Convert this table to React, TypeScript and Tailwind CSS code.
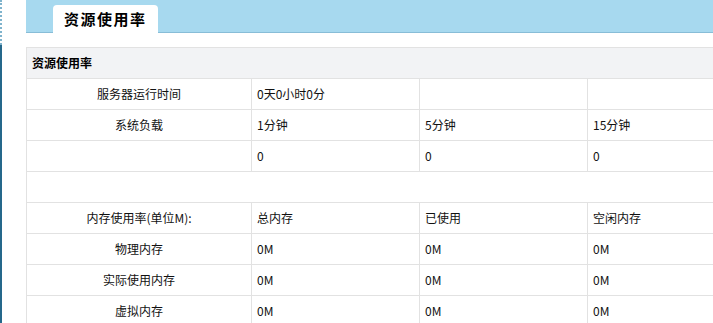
import React from "react";

const font = { fontFamily: '"Noto Sans CJK SC", "Liberation Sans", sans-serif' };

type Cell = { text?: string; center?: boolean };

const rows: Cell[][] = [
  [{ text: "服务器运行时间", center: true }, { text: "0天0小时0分" }, {}, {}],
  [{ text: "系统负载", center: true }, { text: "1分钟" }, { text: "5分钟" }, { text: "15分钟" }],
  [{}, { text: "0" }, { text: "0" }, { text: "0" }],
];

const memRows: Cell[][] = [
  [{ text: "内存使用率(单位M):", center: true }, { text: "总内存" }, { text: "已使用" }, { text: "空闲内存" }],
  [{ text: "物理内存", center: true }, { text: "0M" }, { text: "0M" }, { text: "0M" }],
  [{ text: "实际使用内存", center: true }, { text: "0M" }, { text: "0M" }, { text: "0M" }],
  [{ text: "虚拟内存", center: true }, { text: "0M" }, { text: "0M" }, { text: "0M" }],
];

function Row({ cells }: { cells: Cell[] }) {
  return (
    <tr>
      {cells.map((c, i) => (
        <td
          key={i}
          className={`h-[31px] border border-[#e2e2e2] px-[5px] text-[12px] leading-none text-[#111] ${
            c.center ? "text-center" : "text-left"
          }`}
        >
          {c.text}
        </td>
      ))}
    </tr>
  );
}

export default function App() {
  return (
    <div className="flex h-[323px] w-[713px] overflow-hidden bg-white" style={font}>
      {/* left frame edge */}
      <div className="flex w-[2px] shrink-0 flex-col">
        <div className="h-[45px] border-l-2 border-dotted border-[#7fb3cc]" />
        <div className="flex-1 bg-[#25688b]" />
      </div>
      <div className="ml-[24px] flex min-w-0 flex-1 flex-col">
        {/* tab bar */}
        <div className="flex h-[33px] shrink-0 items-end border-b border-[#88bdd7] bg-[#a7d9ef] pl-[27px]">
          <div className="mb-[-1px] flex h-[28px] w-[105px] items-center rounded-t-[4px] bg-white pl-[11px] text-[15px] font-bold tracking-[1.5px] text-black">
            资源使用率
          </div>
        </div>
        <div className="h-[14px] shrink-0" />
        <table className="w-[729px] shrink-0 table-fixed border-collapse">
          <colgroup>
            <col className="w-[225px]" />
            <col className="w-[168px]" />
            <col className="w-[168px]" />
            <col className="w-[168px]" />
          </colgroup>
          <tbody>
            <tr>
              <td
                colSpan={4}
                className="h-[31px] border border-[#e2e2e2] bg-[#f2f3f5] px-[5px] text-left text-[12px] font-bold text-black"
              >
                资源使用率
              </td>
            </tr>
            {rows.map((r, i) => (
              <Row key={i} cells={r} />
            ))}
            <tr>
              <td colSpan={4} className="h-[31px] border border-[#e2e2e2]" />
            </tr>
            {memRows.map((r, i) => (
              <Row key={i} cells={r} />
            ))}
          </tbody>
        </table>
      </div>
    </div>
  );
}
